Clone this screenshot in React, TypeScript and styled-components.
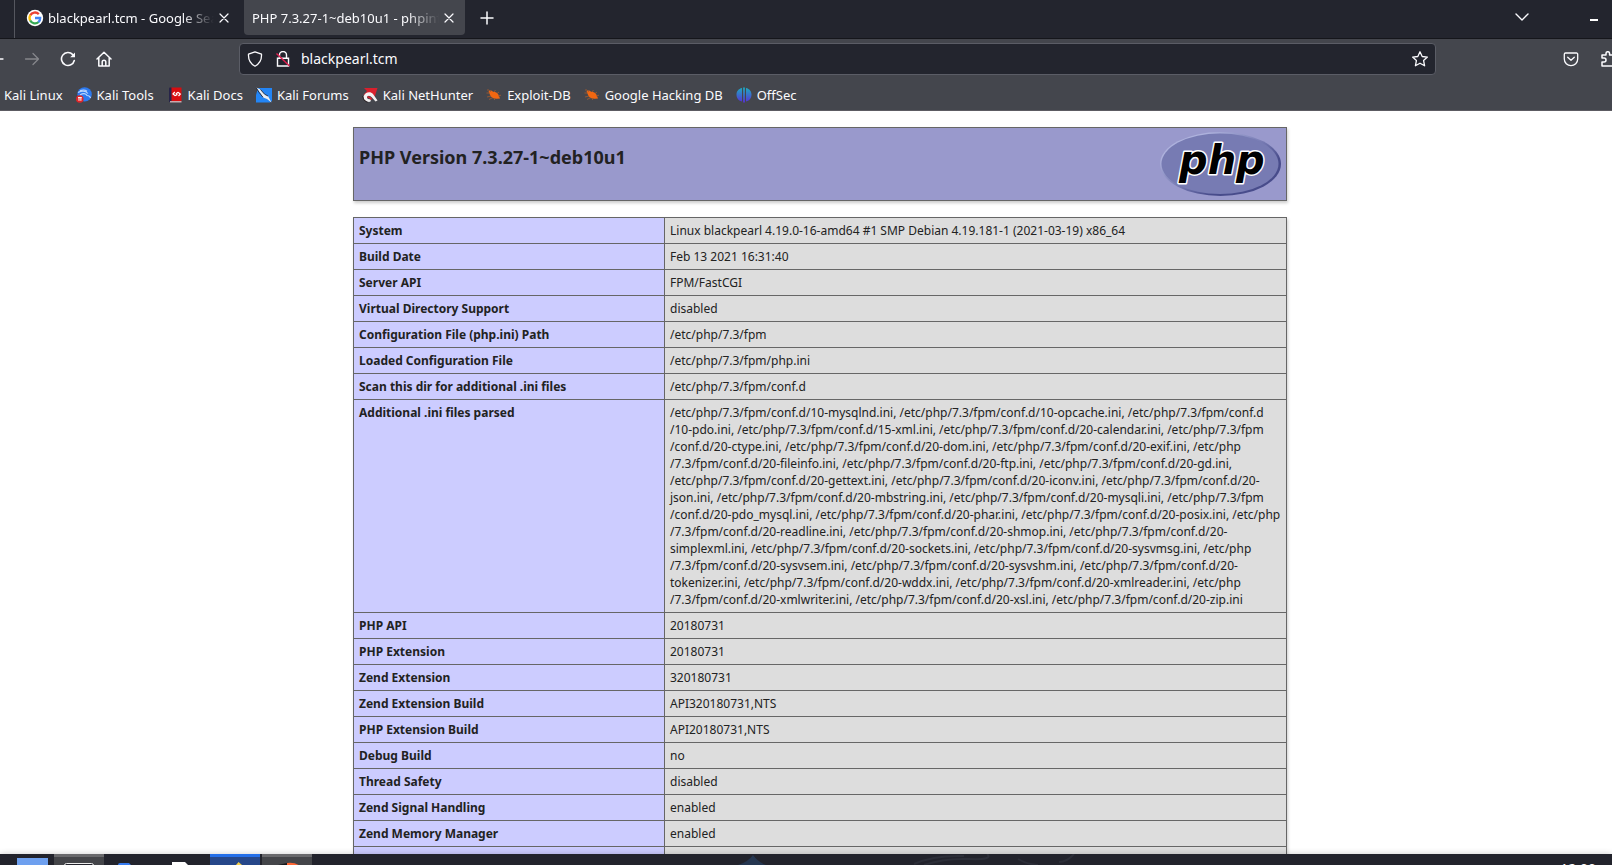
import React from "react";
import styled, { createGlobalStyle } from "styled-components";

const GlobalStyle = createGlobalStyle`
  * { box-sizing: border-box; }
  body { margin: 0; background: #fff; font-family: "Noto Sans", sans-serif; }
`;

const Desktop = styled.div`
  display: flex;
  flex-direction: column;
  height: 100vh;
  overflow: hidden;
`;

const TabBar = styled.header`
  display: flex;
  flex: none;
  height: 39px;
  background: #23252e;
  border-bottom: 1px solid #15161b;
  color: #fbfbfe;
`;

const TabLead = styled.div`
  width: 15px;
  border-right: 1px solid #55575f;
`;

const Tab = styled.div<{ $active?: boolean }>`
  display: flex;
  align-items: center;
  width: ${(p) => (p.$active ? 221 : 229)}px;
  height: 35px;
  padding: 0 ${(p) => (p.$active ? 8 : 12)}px 0 ${(p) => (p.$active ? 8 : 11)}px;
  gap: 2px;
  border-radius: 0 0 4px 4px;
  background: ${(p) => (p.$active ? "#44464d" : "transparent")};
`;

const TabTitle = styled.span`
  flex: 1;
  min-width: 0;
  overflow: hidden;
  margin-left: 2px;
  font-size: 13px;
  line-height: 36px;
  white-space: nowrap;
  mask-image: linear-gradient(to left, transparent, #000 32px);
  &:first-child { margin-left: 0; }
`;

const IconButton = styled.button`
  display: flex;
  align-items: center;
  justify-content: center;
  flex: none;
  padding: 0;
  border: 0;
  background: none;
  color: #fbfbfe;
  &:disabled { color: #85868b; }
`;

const NewTab = styled(IconButton)`
  width: 44px;
  height: 35px;
`;

const WindowTools = styled.div`
  display: flex;
  align-items: center;
  gap: 60px;
  height: 33px;
  margin-left: auto;
  padding-right: 14px;
`;

const NavBar = styled.nav`
  display: flex;
  align-items: center;
  flex: none;
  height: 40px;
  background: #44464d;
  overflow: hidden;
`;

const NavButtons = styled.div`
  display: flex;
  gap: 20px;
  width: 240px;
  margin-left: -12px;
`;

const UrlBar = styled.div`
  display: flex;
  align-items: center;
  flex: 1;
  min-width: 0;
  height: 32px;
  margin: 0 127px 0 11px;
  padding: 0 7px;
  gap: 12px;
  border: 1px solid #5b5d66;
  border-radius: 4px;
  background: #23252e;
  color: #fbfbfe;
`;

const UrlInput = styled.input`
  flex: 1;
  min-width: 0;
  padding: 0;
  margin-left: -2px;
  border: 0;
  outline: 0;
  background: none;
  color: #fbfbfe;
  font: 14px/20px "Noto Sans", sans-serif;
`;

const Extensions = styled.div`
  display: flex;
  gap: 22px;
  width: 49px;
`;

const Bookmarks = styled.nav`
  display: flex;
  align-items: center;
  flex: none;
  gap: 13px;
  height: 32px;
  padding-left: 4px;
  background: #44464d;
  border-bottom: 1px solid #5c5b62;
`;

const Bookmark = styled.a`
  display: flex;
  align-items: center;
  gap: 5px;
  color: #fbfbfe;
  font-size: 13px;
  line-height: 18px;
  text-decoration: none;
  white-space: nowrap;
`;

const Page = styled.main`
  flex: 1;
  min-height: 0;
  overflow: hidden;
  padding: 16px 0 0 28px;
  color: #222;
`;

const InfoTable = styled.table`
  width: 934px;
  max-width: 100%;
  margin: 0 auto 16px;
  border-collapse: collapse;
  box-shadow: 1px 2px 3px #ccc;
  font-size: 12px;
  line-height: 17px;
`;

const HeaderCell = styled.td`
  padding: 4px 5px;
  border: 1px solid #666;
  background: #9999cc;
`;

const HeaderInner = styled.div`
  display: flex;
  justify-content: space-between;
  height: 64px;
`;

const Title = styled.h1`
  margin: 13px 0;
  font-size: 18px;
  line-height: 25px;
`;

const Key = styled.th`
  width: 311px;
  height: 26px;
  padding: 4px 5px;
  border: 1px solid #666;
  background: #ccccff;
  text-align: left;
  vertical-align: baseline;
  font-weight: bold;
`;

const Value = styled.td`
  padding: 4px 5px;
  border: 1px solid #666;
  background: #ddd;
  vertical-align: baseline;
`;

const Line = styled.div`
  white-space: nowrap;
`;

const Taskbar = styled.footer`
  display: flex;
  flex: none;
  gap: 2px;
  height: 11px;
  padding-left: 2px;
  overflow: hidden;
  background: #22232c;
  box-shadow: 0 0 6px #0003;
  position: relative;
`;

const Task = styled.button<{ $state?: "open" | "active" }>`
  flex: none;
  width: 50px;
  height: 40px;
  padding: 0;
  border: 0;
  border-top: 3px solid ${(p) => (p.$state === "active" ? "#246fe8" : p.$state ? "#69696c" : "transparent")};
  background: ${(p) => (p.$state === "active" ? "#264789" : p.$state ? "#444549" : "transparent")};
  svg { display: block; }
`;

const Wallpaper = styled.svg`
  flex: none;
  margin-left: 400px;
`;

const Clock = styled.time`
  margin: 5px 16px 0 auto;
  color: #fff;
  font-size: 14px;
  line-height: 20px;
`;

function Stroke({ d, size = 16, width = 1.3 }: { d: string; size?: number; width?: number }) {
  return (
    <svg width={size} height={size} viewBox="0 0 16 16" fill="none" stroke="currentColor" strokeWidth={width} strokeLinecap="round" strokeLinejoin="round">
      <path d={d} />
    </svg>
  );
}

const CloseIcon = () => <Stroke d="M4 4l8 8M12 4l-8 8" width={1.2} />;

const GoogleIcon = () => (
  <svg width="18" height="18" viewBox="0 0 18 18">
    <circle cx="9" cy="9" r="8.2" fill="#fff" />
    <g fill="none" strokeWidth="2.3">
      <path d="M4.2 6.4A5.4 5.4 0 0 1 12.8 5.1" stroke="#ea4335" />
      <path d="M4.3 11.7A5.4 5.4 0 0 1 4.3 6.2" stroke="#fbbc05" />
      <path d="M12.7 13A5.4 5.4 0 0 1 4.2 11.5" stroke="#34a853" />
      <path d="M9 9h5.2A5.2 5.2 0 0 1 12.4 13.1" stroke="#4285f4" />
    </g>
  </svg>
);

const ToolsIcon = () => (
  <svg width="16" height="16" viewBox="0 0 16 16">
    <circle cx="8.6" cy="7.4" r="7.2" fill="#2c79ef" />
    <path d="M2 5.5C6 3.5 10 4 12 6.5M4 8c3-2 6-1.8 7 .5 1.5 0 3 1 3.6 2.5M4 3.6c3-1 5.500-.6 7 .6" fill="none" stroke="#b9d5ff" strokeWidth="1.1" />
    <circle cx="3.8" cy="12" r="3.8" fill="#df2528" />
    <path d="M2 10.6h3.8M3 10.6v3.2M4.9 10.6v3.2" stroke="#fff" strokeWidth="1" />
  </svg>
);

const DocsIcon = () => (
  <svg width="16" height="16" viewBox="-2 0 16 16">
    <path d="M1 1.500Q1 .5 2 .5h10.500V14H1z" fill="#d80d10" />
    <path d="M0 1.500Q0 .5 1 .5h1.500V15H0z" fill="#272449" />
    <path d="M1 14h11.500v1.500H1z" fill="#c9a9ac" />
    <path d="M5.800 5L4 7l2.300 1.800M9 5.200L11.300 7 9.500 9M6.300 8.800L7.600 7.600M9 5.200L7.700 6.400M7 6l1.300 2.200" fill="none" stroke="#fff" strokeWidth="1.200" />
  </svg>
);

const ForumsIcon = () => (
  <svg width="16" height="16" viewBox="0 0 16 16">
    <path d="M2 1h14v13l-2 1.500H0V8z" fill="#2385f5" />
    <path d="M0 .5l4.500 2 4.200 4.800 3.300 1.700 3.500 6.500-4.500-3.500-4-1.500L3.500 5z" fill="#e9edf2" />
    <path d="M0 .5l3 4.800 4 5M4.500 2.500l4.200 4.800 3.300 1.700" fill="none" stroke="#202638" strokeWidth=".9" />
  </svg>
);

const NetHunterIcon = () => (
  <svg width="16" height="16" viewBox="0 0 16 16">
    <path d="M2 1h13.500L12 12 9 9 1.500 8L5 4z" fill="#d9202d" />
    <path d="M1.500 9.500C3 5 8.500 4 11 7l4.500 6.500-2 1L10 10.500Q8 8.300 6 9q-2 1.500 0 3l3 .5q0 2.500-2 2.500-5.500-1-5.500-5.500z" fill="#f4f1f1" />
    <path d="M5.500 10.200q2.500-.5 4 2.300" fill="none" stroke="#d9202d" strokeWidth="1.800" />
    <path d="M.500 9q.5 5 5 6.500" fill="none" stroke="#2a2023" strokeWidth=".9" />
  </svg>
);

const ExploitIcon = () => (
  <svg width="16" height="16" viewBox="0 0 16 16">
    <path d="M2.500 4.500Q5 2.500 7 4.800q4.500 0 6 4.200l1 2.500-3 .2Q6.500 12.500 4.500 9z" fill="#f26711" />
    <path d="M5 5Q3 2 1 3M4 6L.5 6M5 9L1 10M7 10.500l-4 2M10 11l-2 2M8 5L9.500 3M11 6.500l2-1.500M12 9l3-.8" fill="none" stroke="#a65a2d" strokeWidth=".8" />
  </svg>
);

const OffSecIcon = () => (
  <svg width="16" height="16" viewBox="0 0 16 16">
    <defs>
      <linearGradient id="offsec" x1="0" y1="0" x2="0" y2="1">
        <stop offset="0" stopColor="#1cacc0" />
        <stop offset="1" stopColor="#5730d8" />
      </linearGradient>
    </defs>
    <path d="M6 1v13.500C2 13.500.500 10.500.500 7.500S2.500 1.700 6 1zM7.100.500h1.800v15H7.100zM10 1c3.500.700 5.500 3.500 5.500 6.500S14 13.500 10 14.500z" fill="url(#offsec)" />
  </svg>
);

const PhpLogo = () => (
  <svg width="121" height="65" viewBox="0 0 121 65" role="img" aria-label="PHP logo">
    <defs>
      <linearGradient id="rim" x1="0" y1="0" x2="1" y2="1">
        <stop offset=".2" stopColor="#aeb2dd" />
        <stop offset=".5" stopColor="#777bb3" />
        <stop offset=".7" stopColor="#484c8b" />
      </linearGradient>
    </defs>
    <ellipse cx="60.5" cy="32" rx="60.5" ry="32" fill="url(#rim)" />
    <ellipse cx="60" cy="31.800" rx="58.500" ry="30.300" fill="#777bb3" />
    <text x="19" y="42" fontFamily="DejaVu Sans, sans-serif" fontWeight="bold" fontStyle="italic" fontSize="40" fill="#000" stroke="#fff" strokeWidth="3" paintOrder="stroke" strokeLinejoin="round">
      php
    </text>
  </svg>
);

const bookmarks: { label: string; icon?: React.ReactNode }[] = [
  { label: "Kali Linux" },
  { label: "Kali Tools", icon: <ToolsIcon /> },
  { label: "Kali Docs", icon: <DocsIcon /> },
  { label: "Kali Forums", icon: <ForumsIcon /> },
  { label: "Kali NetHunter", icon: <NetHunterIcon /> },
  { label: "Exploit-DB", icon: <ExploitIcon /> },
  { label: "Google Hacking DB", icon: <ExploitIcon /> },
  { label: "OffSec", icon: <OffSecIcon /> },
];

const rows: [string, string | string[]][] = [
  ["System", "Linux blackpearl 4.19.0-16-amd64 #1 SMP Debian 4.19.181-1 (2021-03-19) x86_64"],
  ["Build Date", "Feb 13 2021 16:31:40"],
  ["Server API", "FPM/FastCGI"],
  ["Virtual Directory Support", "disabled"],
  ["Configuration File (php.ini) Path", "/etc/php/7.3/fpm"],
  ["Loaded Configuration File", "/etc/php/7.3/fpm/php.ini"],
  ["Scan this dir for additional .ini files", "/etc/php/7.3/fpm/conf.d"],
  [
    "Additional .ini files parsed",
    [
      "/etc/php/7.3/fpm/conf.d/10-mysqlnd.ini, /etc/php/7.3/fpm/conf.d/10-opcache.ini, /etc/php/7.3/fpm/conf.d",
      "/10-pdo.ini, /etc/php/7.3/fpm/conf.d/15-xml.ini, /etc/php/7.3/fpm/conf.d/20-calendar.ini, /etc/php/7.3/fpm",
      "/conf.d/20-ctype.ini, /etc/php/7.3/fpm/conf.d/20-dom.ini, /etc/php/7.3/fpm/conf.d/20-exif.ini, /etc/php",
      "/7.3/fpm/conf.d/20-fileinfo.ini, /etc/php/7.3/fpm/conf.d/20-ftp.ini, /etc/php/7.3/fpm/conf.d/20-gd.ini,",
      "/etc/php/7.3/fpm/conf.d/20-gettext.ini, /etc/php/7.3/fpm/conf.d/20-iconv.ini, /etc/php/7.3/fpm/conf.d/20-",
      "json.ini, /etc/php/7.3/fpm/conf.d/20-mbstring.ini, /etc/php/7.3/fpm/conf.d/20-mysqli.ini, /etc/php/7.3/fpm",
      "/conf.d/20-pdo_mysql.ini, /etc/php/7.3/fpm/conf.d/20-phar.ini, /etc/php/7.3/fpm/conf.d/20-posix.ini, /etc/php",
      "/7.3/fpm/conf.d/20-readline.ini, /etc/php/7.3/fpm/conf.d/20-shmop.ini, /etc/php/7.3/fpm/conf.d/20-",
      "simplexml.ini, /etc/php/7.3/fpm/conf.d/20-sockets.ini, /etc/php/7.3/fpm/conf.d/20-sysvmsg.ini, /etc/php",
      "/7.3/fpm/conf.d/20-sysvsem.ini, /etc/php/7.3/fpm/conf.d/20-sysvshm.ini, /etc/php/7.3/fpm/conf.d/20-",
      "tokenizer.ini, /etc/php/7.3/fpm/conf.d/20-wddx.ini, /etc/php/7.3/fpm/conf.d/20-xmlreader.ini, /etc/php",
      "/7.3/fpm/conf.d/20-xmlwriter.ini, /etc/php/7.3/fpm/conf.d/20-xsl.ini, /etc/php/7.3/fpm/conf.d/20-zip.ini",
    ],
  ],
  ["PHP API", "20180731"],
  ["PHP Extension", "20180731"],
  ["Zend Extension", "320180731"],
  ["Zend Extension Build", "API320180731,NTS"],
  ["PHP Extension Build", "API20180731,NTS"],
  ["Debug Build", "no"],
  ["Thread Safety", "disabled"],
  ["Zend Signal Handling", "enabled"],
  ["Zend Memory Manager", "enabled"],
  ["", ""],
];

export default function App() {
  return (
    <Desktop>
      <GlobalStyle />
      <TabBar>
        <TabLead />
        <Tab>
          <GoogleIcon />
          <TabTitle>blackpearl.tcm - Google Search</TabTitle>
          <IconButton aria-label="Close tab"><CloseIcon /></IconButton>
        </Tab>
        <Tab $active>
          <TabTitle>PHP 7.3.27-1~deb10u1 - phpinfo()</TabTitle>
          <IconButton aria-label="Close tab"><CloseIcon /></IconButton>
        </Tab>
        <NewTab aria-label="New tab"><Stroke d="M8 2v12M2 8h12" width={1.5} /></NewTab>
        <WindowTools>
          <IconButton aria-label="List all tabs"><Stroke d="M2 5l6 6 6-6" width={1.4} /></IconButton>
          <IconButton aria-label="Minimize">
            <svg width="8" height="8" viewBox="0 0 8 8"><path d="M0 6h8v2H0z" fill="#fff" /></svg>
          </IconButton>
        </WindowTools>
      </TabBar>
      <NavBar>
        <NavButtons>
          <IconButton aria-label="Back"><Stroke d="M1 8h14M7 2L1 8l6 6" /></IconButton>
          <IconButton aria-label="Forward" disabled><Stroke d="M1.500 8h13M9 2.500L14.500 8 9 13.500" /></IconButton>
          <IconButton aria-label="Reload">
            <svg width="16" height="16" viewBox="0 0 16 16" fill="none" stroke="currentColor" strokeWidth="1.600" strokeLinecap="round">
              <path d="M14.300 9.500A6.500 6.500 0 1 1 12.800 3.600L14 5" />
              <path d="M15 1.500V6.300H10.200z" fill="currentColor" stroke="none" />
            </svg>
          </IconButton>
          <IconButton aria-label="Home"><Stroke d="M1 8l7-6.800L15 8M2.800 6.500V15h10.400V6.500M6.200 15v-4a1.800 1.800 0 0 1 3.600 0v4" width={1.5} /></IconButton>
        </NavButtons>
        <UrlBar>
          <IconButton aria-label="Tracking protection"><Stroke d="M8 .8l6.500 2.400q.5 8.300-6.500 12Q1 11.500 1.500 3.200z" /></IconButton>
          <IconButton aria-label="Connection is not secure">
            <svg width="16" height="16" viewBox="0 0 16 16" fill="none" stroke="currentColor" strokeWidth="1.400">
              <path d="M4.500 7V4a3.500 3.500 0 0 1 7 0v3M2.500 7.200h11V15h-11z" />
              <path d="M1.500 2.500L14.500 15" stroke="#e01f50" strokeWidth="1.500" />
            </svg>
          </IconButton>
          <UrlInput aria-label="Address" defaultValue="blackpearl.tcm" />
          <IconButton aria-label="Bookmark this page"><Stroke d="M8 .8l2.200 4.700 5.200.6-3.800 3.500 1 5.200L8 12.200l-4.600 2.600 1-5.200L.6 6.100l5.200-.6z" /></IconButton>
        </UrlBar>
        <Extensions>
          <IconButton aria-label="Save to Pocket"><Stroke d="M2.500 2h11a1.200 1.200 0 0 1 1.200 1.200V8A6.700 6.700 0 0 1 1.300 8V3.200A1.200 1.200 0 0 1 2.500 2zM4.700 6.200L8 9.300l3.300-3.100" /></IconButton>
          <IconButton aria-label="Extensions"><Stroke d="M1 15V11h2a2 2 0 0 0 0-4H1V4h4V2.500a1.800 1.800 0 0 1 3.600 0V4H13v11z" width={1.5} /></IconButton>
        </Extensions>
      </NavBar>
      <Bookmarks>
        {bookmarks.map((b) => (
          <Bookmark key={b.label} href="#">{b.icon}{b.label}</Bookmark>
        ))}
      </Bookmarks>
      <Page>
        <InfoTable>
          <tbody>
            <tr>
              <HeaderCell>
                <HeaderInner>
                  <Title>PHP Version 7.3.27-1~deb10u1</Title>
                  <PhpLogo />
                </HeaderInner>
              </HeaderCell>
            </tr>
          </tbody>
        </InfoTable>
        <InfoTable>
          <tbody>
            {rows.map(([key, value]) => (
              <tr key={key}>
                <Key scope="row">{key}</Key>
                <Value>{Array.isArray(value) ? value.map((line) => <Line key={line}>{line}</Line>) : value}</Value>
              </tr>
            ))}
          </tbody>
        </InfoTable>
      </Page>
      <Taskbar>
        <Task aria-label="Show desktop">
          <svg width="50" height="37"><path d="M15 1h31v24H15z" fill="#6ea0ef" /></svg>
        </Task>
        <Task $state="open" aria-label="Terminal">
          <svg width="50" height="37"><rect x="10.500" y="6.500" width="29" height="22" rx="2" fill="#22232c" stroke="#eee" /></svg>
        </Task>
        <Task aria-label="Files">
          <svg width="50" height="37"><path d="M12 8q0-2 2-2h9l2 2v20H12z" fill="#367bf0" /></svg>
        </Task>
        <Task aria-label="Text editor">
          <svg width="50" height="37"><path d="M14 5h13l5 5v20H14z" fill="#fff" /></svg>
        </Task>
        <Task $state="active" aria-label="Web browser">
          <svg width="50" height="37"><path d="M26 8l2.500-3L32 8v10h-8z" fill="#f5cf4b" /></svg>
        </Task>
        <Task $state="open" aria-label="Burp Suite">
          <svg width="50" height="37">
            <path d="M16 8l9-2v10z" fill="#17181c" />
            <path d="M25 6q8-1 13 3v8H25z" fill="#ff6633" />
          </svg>
        </Task>
        <Wallpaper width="400" height="11" viewBox="0 0 400 11" fill="none">
          <path d="M24 11Q34 8 39 1Q44 8 52 11z" fill="#253650" />
          <path d="M200 10Q220 1 250 2M210 11q20-7 45-6t18-5M304 5q8 5 20 6M345 8q8 0 15-8" stroke="#2c2e38" strokeWidth="2" />
        </Wallpaper>
        <Clock>12:00</Clock>
      </Taskbar>
    </Desktop>
  );
}
